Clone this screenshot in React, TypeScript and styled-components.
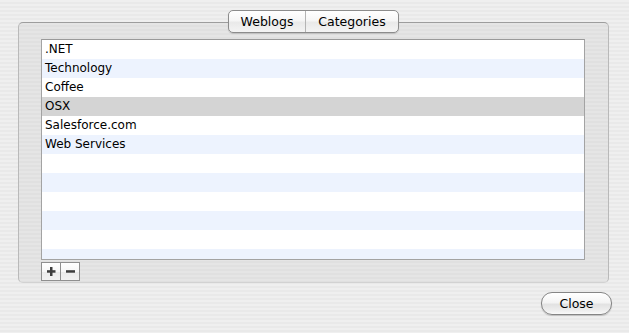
import React from 'react';
import styled, { createGlobalStyle } from 'styled-components';

const GlobalStyle = createGlobalStyle`
    html, body {
        margin: 0;
        padding: 0;
    }
    body {
        width: 629px;
        height: 333px;
        overflow: hidden;
        font-family: "DejaVu Sans", "Liberation Sans", sans-serif;
        font-size: 12px;
        color: #000;
        background: repeating-linear-gradient(
            to bottom,
            #efefef 0px,
            #efefef 2px,
            #e9e9e9 2px,
            #e9e9e9 4px
        );
    }
`;

const Window = styled.div`
    display: flex;
    flex-direction: column;
    padding: 10px 17px 0 18px;
    height: 333px;
    box-sizing: border-box;
`;

const GroupArea = styled.div`
    display: flex;
    flex-direction: column;
    align-items: center;
    margin-right: 3px;
`;

const Tabs = styled.div`
    display: flex;
    height: 23px;
    box-sizing: border-box;
    border: 1px solid #8c8c8c;
    border-radius: 5px;
    background: linear-gradient(to bottom, #ffffff 0%, #f6f6f6 45%, #e9e9e9 55%, #f4f4f4 100%);
    box-shadow: 0 1px 1px rgba(0, 0, 0, 0.15);
    margin-bottom: -11px;
    position: relative;
    z-index: 1;
`;

const Tab = styled.div<{ $width: number; $divider?: boolean }>`
    width: ${p => p.$width}px;
    display: flex;
    align-items: center;
    justify-content: center;
    border-left: ${p => (p.$divider ? '1px solid #b4b4b4' : 'none')};
    font-size: 12.5px;
    line-height: 21px;
`;

const GroupBox = styled.div`
    align-self: stretch;
    height: 261px;
    box-sizing: border-box;
    border: 1px solid #b9b9b9;
    border-top-color: #9d9d9d;
    border-bottom-color: #d2d2d2;
    border-radius: 5px;
    background: repeating-linear-gradient(
        to bottom,
        #e5e5e5 0px,
        #e5e5e5 2px,
        #e0e0e0 2px,
        #e0e0e0 4px
    );
    padding: 16px 23px 0 22px;
    display: flex;
    flex-direction: column;
`;

const List = styled.div`
    height: 221px;
    box-sizing: border-box;
    border: 1px solid #a3a3a3;
    border-top-color: #9a9a9a;
    background: #fff;
    overflow: hidden;
`;

const Row = styled.div<{ $odd: boolean; $selected?: boolean }>`
    height: 19px;
    line-height: 19px;
    padding-left: 3px;
    background: ${p => (p.$selected ? '#d4d4d4' : p.$odd ? '#edf3fe' : '#ffffff')};
    white-space: nowrap;
`;

const ButtonBar = styled.div`
    display: flex;
    margin-top: 2px;
`;

const SmallButton = styled.button`
    width: 20px;
    height: 19px;
    padding: 0;
    margin: 0;
    border: 1px solid #8f8f8f;
    background: linear-gradient(to bottom, #ffffff 0%, #f7f7f7 50%, #ebebeb 51%, #f2f2f2 100%);
    display: flex;
    align-items: center;
    justify-content: center;
    & + & {
        margin-left: -1px;
    }
`;

const Footer = styled.div`
    display: flex;
    justify-content: flex-end;
    margin-top: 9px;
`;

const CloseButton = styled.button`
    width: 71px;
    height: 23px;
    box-sizing: border-box;
    border: 1px solid #858585;
    border-radius: 11px;
    background: linear-gradient(to bottom, #ffffff 0%, #f4f4f4 45%, #e2e2e2 55%, #efefef 85%, #fafafa 100%);
    box-shadow: 0 1px 1px rgba(0, 0, 0, 0.18);
    font-family: "DejaVu Sans", "Liberation Sans", sans-serif;
    font-size: 12.5px;
    color: #000;
    padding: 0;
`;

const PlusIcon = () => (
    <svg width="11" height="11" viewBox="0 0 11 11">
        <rect x="4" y="1" width="2.5" height="9" fill="#3e3e3e" />
        <rect x="1" y="4.2" width="8.5" height="2.5" fill="#3e3e3e" />
    </svg>
);

const MinusIcon = () => (
    <svg width="11" height="11" viewBox="0 0 11 11">
        <rect x="1" y="4.2" width="9" height="2.5" fill="#3e3e3e" />
    </svg>
);

const categories = ['.NET', 'Technology', 'Coffee', 'OSX', 'Salesforce.com', 'Web Services'];

export default function App() {
    const rows = Array.from({ length: 12 }, (_, i) => categories[i] ?? '');
    return (
        <>
            <GlobalStyle />
            <Window>
                <GroupArea>
                    <Tabs>
                        <Tab $width={76}>Weblogs</Tab>
                        <Tab $width={92} $divider>Categories</Tab>
                    </Tabs>
                    <GroupBox>
                        <List>
                            {rows.map((name, i) => (
                                <Row key={i} $odd={i % 2 === 1} $selected={name === 'OSX'}>
                                    {name}
                                </Row>
                            ))}
                        </List>
                        <ButtonBar>
                            <SmallButton aria-label="Add"><PlusIcon /></SmallButton>
                            <SmallButton aria-label="Remove"><MinusIcon /></SmallButton>
                        </ButtonBar>
                    </GroupBox>
                </GroupArea>
                <Footer>
                    <CloseButton>Close</CloseButton>
                </Footer>
            </Window>
        </>
    );
}
